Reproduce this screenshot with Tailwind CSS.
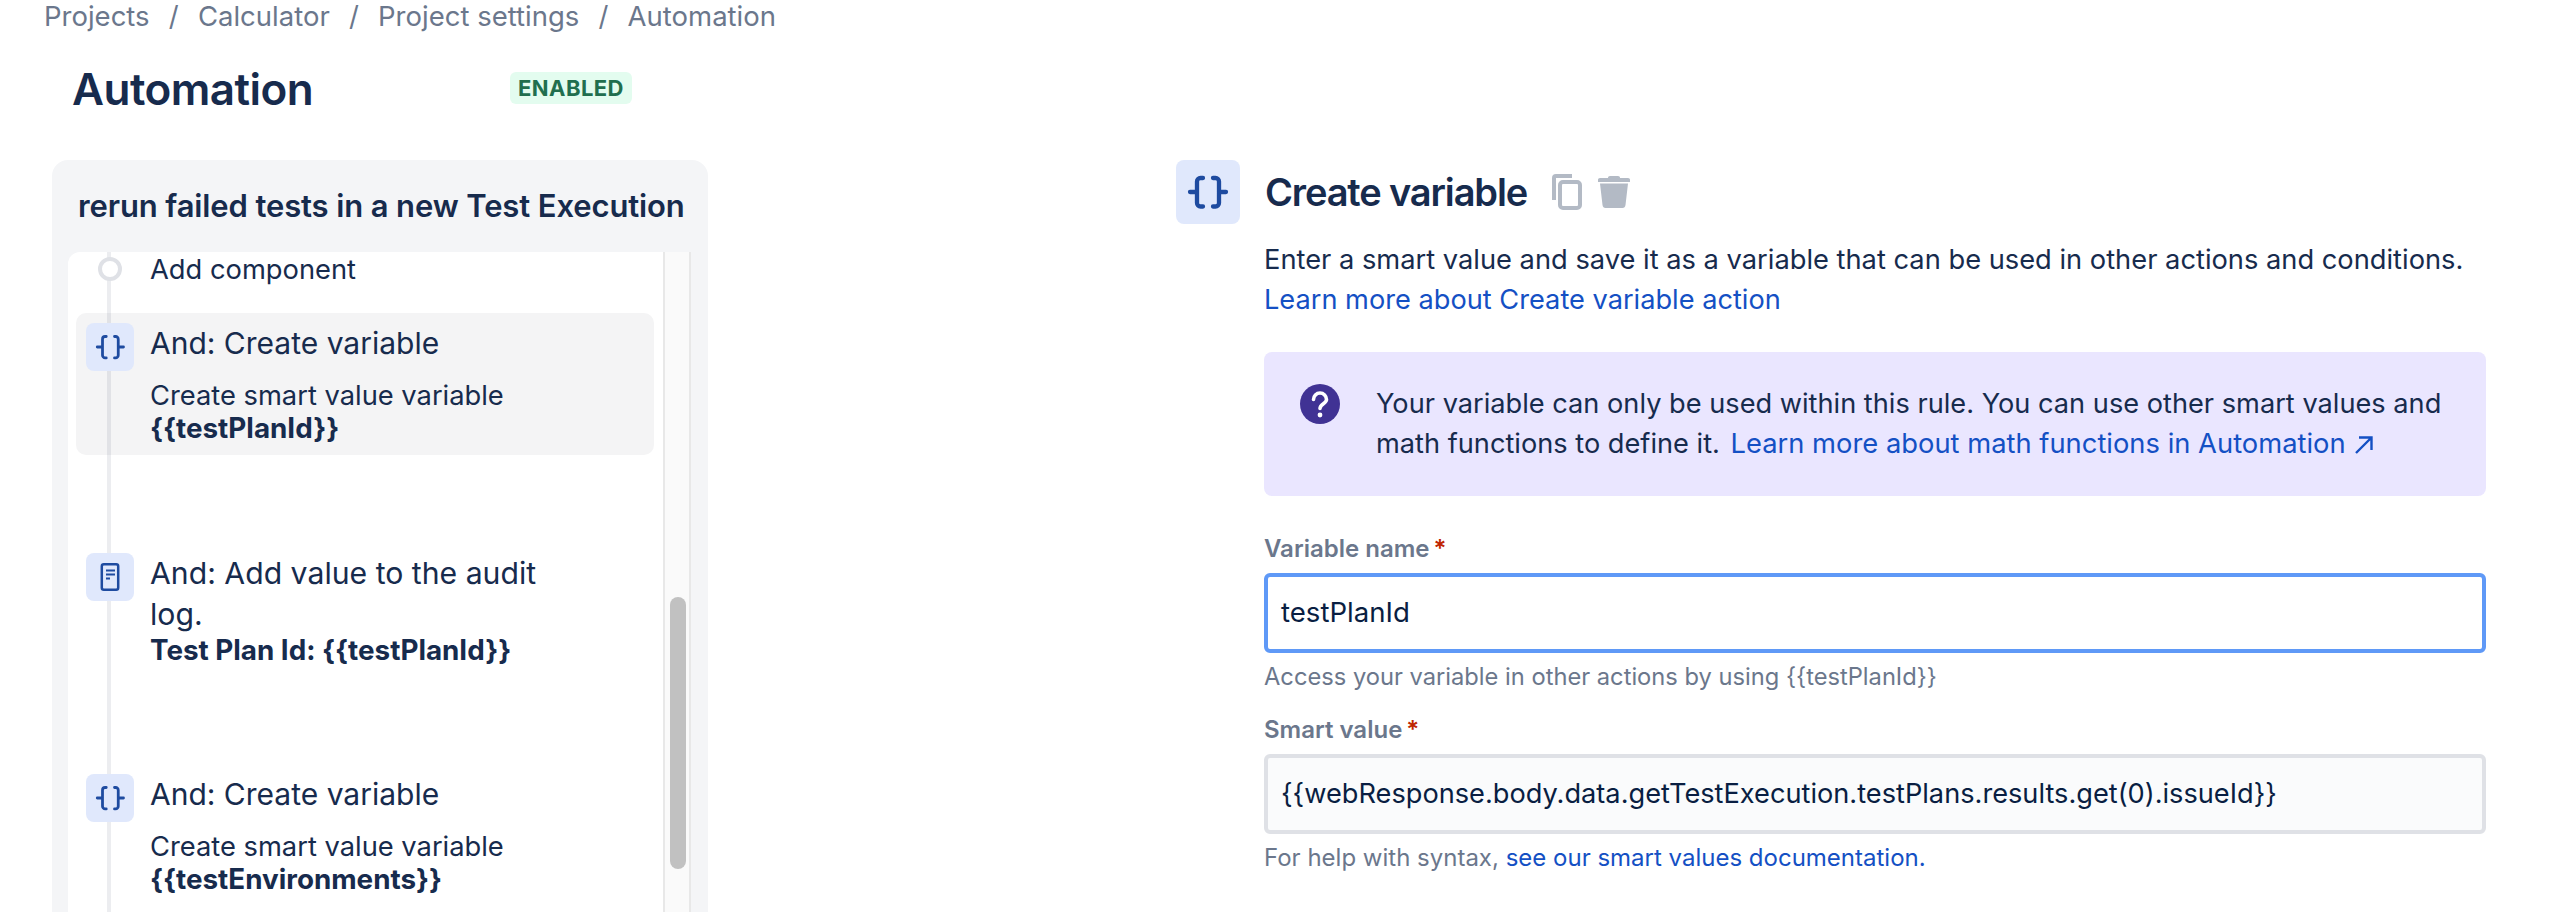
<!DOCTYPE html>
<html>
<head>
<meta charset="utf-8">
<script src="https://cdn.jsdelivr.net/npm/@tailwindcss/browser@4"></script>
</head>
<body>
<div class="w-[2552px] h-[912px] overflow-hidden bg-white text-[#172B4D] font-['Inter',sans-serif]">
  <nav class="h-[32px] pl-[44px] flex gap-[19.2px] text-[27.5px] leading-[32px] text-[#6B778C]">
    <span>Projects</span><span>/</span><span>Calculator</span><span>/</span><span>Project settings</span><span>/</span><span>Automation</span>
  </nav>
  <div class="mt-[29px] h-[56px] pl-[72px] flex items-center">
    <h1 class="w-[438px] text-[44px] leading-[56px] font-semibold tracking-[-0.012em]">Automation</h1>
    <span class="h-[32px] w-[122px] mt-[-2px] flex items-center justify-center rounded-[6px] bg-[#E3FCEF] text-[#216E4E] text-[22px] font-bold tracking-[0.02em]">ENABLED</span>
  </div>
  <div class="mt-[43px] flex items-start">
    <section class="ml-[52px] w-[656px] h-[800px] rounded-t-[16px] bg-[#F4F5F7]">
      <h2 class="h-[92px] pl-[26px] flex items-center whitespace-nowrap text-[31px] font-semibold tracking-[-0.004em]">rerun failed tests in a new Test Execution</h2>
      <div class="ml-[16px] mr-[17px] h-[708px] flex">
        <div class="relative flex-1 bg-white rounded-tl-[12px]">
          <div class="absolute left-[39px] top-0 bottom-0 w-[4px] bg-[#091E42]/8"></div>
          <div class="pt-[2px] flex text-[27.3px] leading-[32px]">
            <div class="relative z-10 ml-[30px] mt-[3px] w-[24px] h-[24px] rounded-full border-[4px] border-[#DFE1E6] bg-white"></div>
            <div class="ml-[28px]">Add component</div>
          </div>
          <div class="mt-[27px] ml-[8px] mr-[9px] pl-[10px] pt-[10px] pb-[10px] flex gap-[16px] rounded-[10px] bg-[#F4F4F5]">
            <div class="relative z-10 w-[48px] h-[48px] rounded-[8px] bg-[#E0E8FC] flex items-center justify-center">
              <svg width="48" height="48" viewBox="0 0 64 64" fill="none" stroke="#1E4BA0" stroke-width="3.700" stroke-linecap="round"><path d="M27 18h-1.500a3.500 3.500 0 0 0-3.500 3.500V43a3.500 3.500 0 0 0 3.500 3.500H27M15 32h7M38 18h1.500a3.500 3.500 0 0 1 3.500 3.500V43a3.500 3.500 0 0 1-3.500 3.500H38M50 32h-7"/></svg>
            </div>
            <div>
              <div class="text-[30px] leading-[40px]">And: Create variable</div>
              <div class="mt-[16px] text-[27.3px] leading-[33px]">Create smart value variable<br><b class="font-bold text-[27.8px]">{{testPlanId}}</b></div>
            </div>
          </div>
          <div class="mt-[98px] ml-[18px] flex gap-[16px]">
            <div class="relative z-10 w-[48px] h-[48px] rounded-[8px] bg-[#E0E8FC] flex items-center justify-center">
              <svg width="48" height="48" viewBox="0 0 48 48" fill="none"><rect x="15.800" y="11.200" width="16.400" height="25.600" rx="2" stroke="#1E4BA0" stroke-width="2.500"/><path d="M20 17.500h9M20 21.500h9M20 25.500h4" stroke="#1E4BA0" stroke-width="2.200"/></svg>
            </div>
            <div>
              <div class="w-[420px] text-[30.200px] leading-[41px]">And: Add value to the audit log.</div>
              <div class="mt-[-1px] text-[27.8px] leading-[33px] font-bold">Test Plan Id: {{testPlanId}}</div>
            </div>
          </div>
          <div class="mt-[107px] ml-[18px] flex gap-[16px]">
            <div class="relative z-10 w-[48px] h-[48px] rounded-[8px] bg-[#E0E8FC] flex items-center justify-center">
              <svg width="48" height="48" viewBox="0 0 64 64" fill="none" stroke="#1E4BA0" stroke-width="3.700" stroke-linecap="round"><path d="M27 18h-1.500a3.500 3.500 0 0 0-3.500 3.500V43a3.500 3.500 0 0 0 3.500 3.500H27M15 32h7M38 18h1.500a3.500 3.500 0 0 1 3.500 3.500V43a3.500 3.500 0 0 1-3.500 3.500H38M50 32h-7"/></svg>
            </div>
            <div>
              <div class="text-[30px] leading-[40px]">And: Create variable</div>
              <div class="mt-[16px] text-[27.3px] leading-[33px]">Create smart value variable<br><b class="font-bold text-[27.8px]">{{testEnvironments}}</b></div>
            </div>
          </div>
        </div>
        <div class="w-[28px] border-x-[2px] border-[#E8E8E8] bg-[#FAFAFA] pl-[5px]">
          <div class="mt-[345px] w-[16px] h-[272px] rounded-[8px] bg-[#C1C1C1]"></div>
        </div>
      </div>
    </section>
    <section class="ml-[468px] w-[1310px]">
      <div class="h-[64px] flex items-center">
        <div class="w-[64px] h-[64px] rounded-[8px] bg-[#E0E8FC] shrink-0">
          <svg width="64" height="64" viewBox="0 0 64 64" fill="none" stroke="#1E4BA0" stroke-width="4.300" stroke-linecap="round"><path d="M27 18h-2.500a3.500 3.500 0 0 0-3.500 3.500V43a3.500 3.500 0 0 0 3.500 3.500H27M14 32h7M37 18h2.500a3.500 3.500 0 0 1 3.500 3.500V43a3.500 3.500 0 0 1-3.500 3.500H37M50 32h-7"/></svg>
        </div>
        <h2 class="ml-[25px] w-[264px] whitespace-nowrap text-[38px] leading-[52px] font-semibold tracking-[-0.03em]">Create variable</h2>
        <svg class="ml-[23px]" width="30" height="36" viewBox="0 0 30 36" fill="none" stroke="#B3BAC5" stroke-width="4"><path d="M2 26V4a2 2 0 0 1 2-2h16"/><rect x="8" y="8" width="20" height="26" rx="3"/></svg>
        <svg class="ml-[16px]" width="32" height="32" viewBox="0 0 32 32" fill="#B3BAC5"><path d="M10 1.500q0-1.500 2-1.500h8q2 0 2 1.500V2h8q2 0 2 1.500V6H0V3.500Q0 2 2 2h8zM2 7.500h28L27.500 29q-.4 3-3 3h-17q-2.600 0-3-3z"/></svg>
      </div>
      <div class="ml-[88px]">
        <div class="mt-[16px] whitespace-nowrap text-[27.2px] leading-[40px]">
          <p class="text-[27.27px]">Enter a smart value and save it as a variable that can be used in other actions and conditions.</p>
          <a class="text-[#1450C4]">Learn more about Create variable action</a>
        </div>
        <div class="mt-[32px] h-[144px] pl-[36px] pt-[32px] flex rounded-[8px] bg-[#EAE6FF]">
          <svg class="shrink-0" width="40" height="40" viewBox="0 0 40 40"><circle cx="20" cy="20" r="20" fill="#403294"/><path d="M13.500 15.500a6.500 6.500 0 0 1 13 0c0 4-6.500 4.500-6.500 9" fill="none" stroke="#fff" stroke-width="3.600" stroke-linecap="round"/><circle cx="20" cy="31" r="2.400" fill="#fff"/></svg>
          <p class="ml-[36px] w-[1090px] text-[27.2px] leading-[40px]">Your variable can only be used within this rule. You can use other smart values and math functions to define it. <a class="ml-[3px] text-[27.35px] text-[#1450C4]">Learn more about math functions in Automation <svg class="inline-block align-[-1px] ml-[2px]" width="18" height="18" viewBox="0 0 18 18" fill="none" stroke="#1450C4" stroke-width="2.400"><path d="M1 17 16.500 1.500M4 1.500h12.500V14"/></svg></a></p>
        </div>
        <div class="mt-[37px] flex text-[24px] leading-[32px] font-semibold text-[#6B778C]">Variable name<span class="ml-[4px] text-[#BF2600]">*</span></div>
        <div class="mt-[8px] h-[80px] px-[13px] flex items-center rounded-[6px] border-[4px] border-[#5F99F7] bg-white text-[27.6px] text-[#091E42]">testPlanId</div>
        <p class="mt-[8px] text-[23.7px] leading-[32px] text-[#6B778C]">Access your variable in other actions by using {{testPlanId}}</p>
        <div class="mt-[21px] flex text-[24px] leading-[32px] font-semibold text-[#6B778C]">Smart value<span class="ml-[4px] text-[#BF2600]">*</span></div>
        <div class="mt-[8px] h-[80px] px-[13px] flex items-center rounded-[6px] border-[4px] border-[#DFE1E6] bg-[#FAFBFC] text-[27.2px] text-[#091E42]">{{webResponse.body.data.getTestExecution.testPlans.results.get(0).issueId}}</div>
        <p class="mt-[8px] text-[24px] leading-[32px] text-[#6B778C]">For help with syntax, <a class="text-[#1450C4]">see our smart values documentation.</a></p>
      </div>
    </section>
  </div>
</div>
</body>
</html>
